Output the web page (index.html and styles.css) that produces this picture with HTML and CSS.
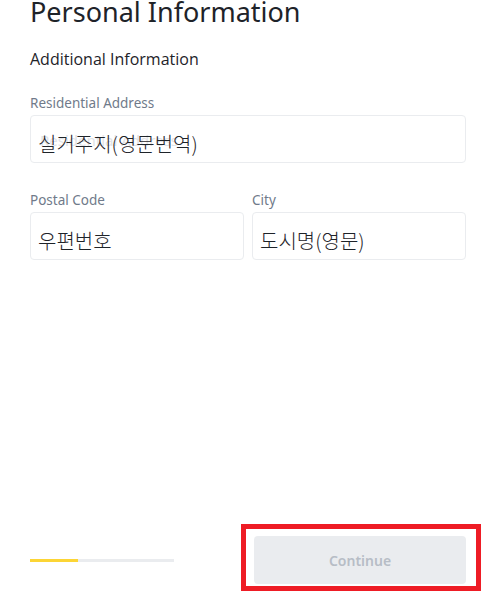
FILE: index.html
```html
<!DOCTYPE html>
<html lang="en">
<head>
<meta charset="utf-8">
<title>Personal Information</title>
<link rel="stylesheet" href="styles.css">
</head>
<body>
<div class="page">
  <main class="content">
    <h1 class="title">Personal Information</h1>
    <h2 class="section">Additional Information</h2>
    <div class="field">
      <label class="label">Residential Address</label>
      <div class="input">
        <span class="ghost">Residential Address</span>
        <span class="value">실거주지(영문번역)</span>
      </div>
    </div>
    <div class="row">
      <div class="field">
        <label class="label">Postal Code</label>
        <div class="input"><span class="value">우편번호</span></div>
      </div>
      <div class="field">
        <label class="label">City</label>
        <div class="input"><span class="value">도시명(영문)</span></div>
      </div>
    </div>
  </main>
  <footer class="footer">
    <div class="progress"><div class="progress-fill"></div></div>
    <div class="action">
      <button class="btn" disabled>Continue</button>
      <div class="highlight"></div>
    </div>
  </footer>
</div>
</body>
</html>
```
FILE: styles.css
```css
* { box-sizing: border-box; }
html, body { margin: 0; padding: 0; background: #fff; }
body {
  font-family: "Noto Sans", "Noto Sans CJK KR", sans-serif;
  color: #1e2329;
}
.page {
  width: 488px;
  height: 602px;
  display: flex;
  flex-direction: column;
  padding: 0 22px 0 30px;
}
.content { flex: 1; display: flex; flex-direction: column; }
.title {
  margin: -6px 0 0 0;
  font-size: 27px;
  line-height: 36px;
  font-weight: 400;
  color: #1e2329;
}
.section {
  margin: 19px 0 0 0;
  font-family: "Open Sans", sans-serif;
  font-size: 16px;
  line-height: 20px;
  font-weight: 500;
  color: #1e2329;
}
.field { display: flex; flex-direction: column; margin-top: 25px; }
.label {
  font-size: 13.5px;
  line-height: 18px;
  color: #707a8a;
  margin-bottom: 3px;
}
.row { display: grid; grid-template-columns: 1fr 1fr; gap: 8px; margin-top: 3px; }
.input {
  position: relative;
  height: 48px;
  border: 1px solid #eaecef;
  border-radius: 4px;
  display: flex;
  align-items: center;
  padding: 9px 0 0 7px;
}
.value {
  font-family: "Noto Sans CJK KR", sans-serif;
  font-size: 20px;
  font-weight: 300;
  color: #1e2329;
  position: relative;
}
.ghost {
  position: absolute;
  left: 9px;
  top: 14px;
  font-size: 15px;
  color: #e1e3e7;
}
.footer {
  height: 84px;
  display: flex;
  align-items: center;
  justify-content: space-between;
}
.progress { width: 144px; height: 3px; background: #eaecef; }
.progress-fill { width: 48px; height: 3px; background: #fcd535; }
.action { position: relative; width: 212px; }
.btn {
  display: block;
  width: 212px;
  height: 48px;
  border: none;
  border-radius: 4px;
  background: #eaecef;
  color: #b7bdc6;
  font-family: "Noto Sans", sans-serif;
  font-size: 14px;
  font-weight: 600;
}
.highlight {
  position: absolute;
  left: -13px;
  top: -12px;
  width: 240px;
  height: 67px;
  border: 5px solid #ee1c25;
}
```
